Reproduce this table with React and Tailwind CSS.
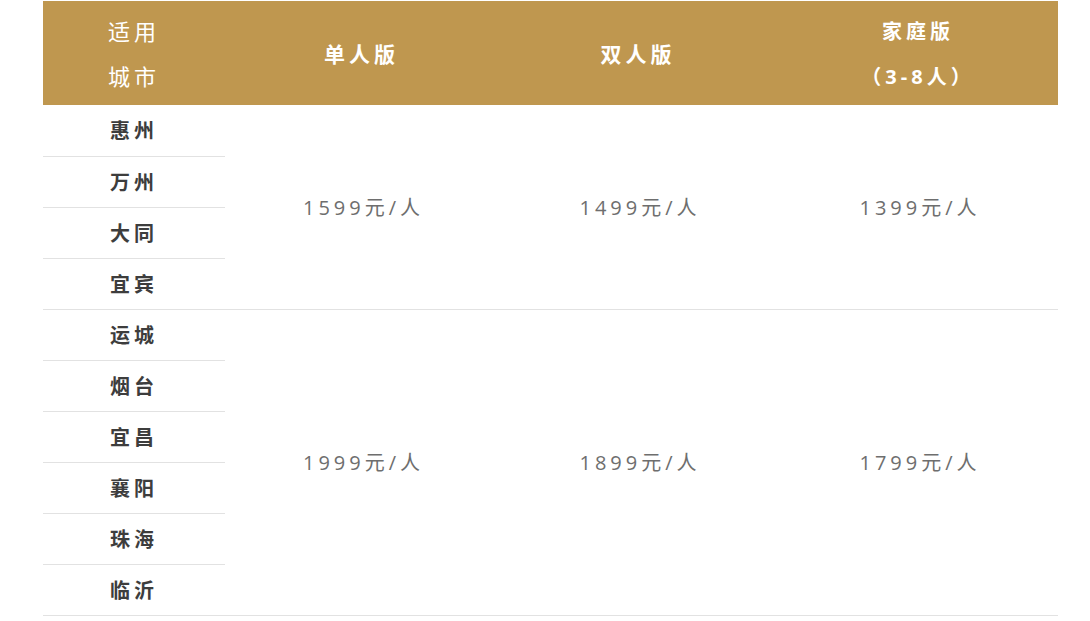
import React from "react";

const groups = [
  {
    cities: ["惠州", "万州", "大同", "宜宾"],
    prices: ["1599元/人", "1499元/人", "1399元/人"],
  },
  {
    cities: ["运城", "烟台", "宜昌", "襄阳", "珠海", "临沂"],
    prices: ["1999元/人", "1899元/人", "1799元/人"],
  },
];

const App = () => {
  return (
    <div
      className="w-[1090px] h-[621px] bg-white pt-px"
      style={{ fontFamily: '"Open Sans", "Noto Sans CJK SC", sans-serif' }}
    >
      <table className="ml-[43px] w-[1015px] border-collapse table-fixed">
        <colgroup>
          <col className="w-[182px]" />
          <col className="w-[273px]" />
          <col className="w-[280px]" />
          <col className="w-[280px]" />
        </colgroup>
        <thead>
          <tr className="bg-[#bf974f] h-[104px] text-white text-[21px] leading-[45px] tracking-[4px]">
            <th className="font-normal text-center text-[22px] pt-[2px]">
              适用
              <br />
              城市
            </th>
            <th className="font-bold text-center pt-[2px]">单人版</th>
            <th className="font-bold text-center pt-[2px]">双人版</th>
            <th className="font-bold text-center text-[20px] pt-[2px]">
              家庭版
              <br />
              （3-8人）
            </th>
          </tr>
        </thead>
        <tbody>
          {groups.map((group) =>
            group.cities.map((city, ci) => (
              <tr key={city} className="h-[51px]">
                <td className="border-b border-[#e2e2e2] text-center text-[20px] font-bold text-[#3d3d3d] tracking-[4px] pt-[2px]">
                  {city}
                </td>
                {ci === 0 &&
                  group.prices.map((price) => (
                    <td
                      key={price}
                      rowSpan={group.cities.length}
                      className="border-b border-[#e2e2e2] text-center align-middle text-[20px] text-[#6e6e6e] tracking-[4px] pl-[4px] pt-[2px]"
                    >
                      {price}
                    </td>
                  ))}
              </tr>
            ))
          )}
        </tbody>
      </table>
    </div>
  );
};

export default App;
